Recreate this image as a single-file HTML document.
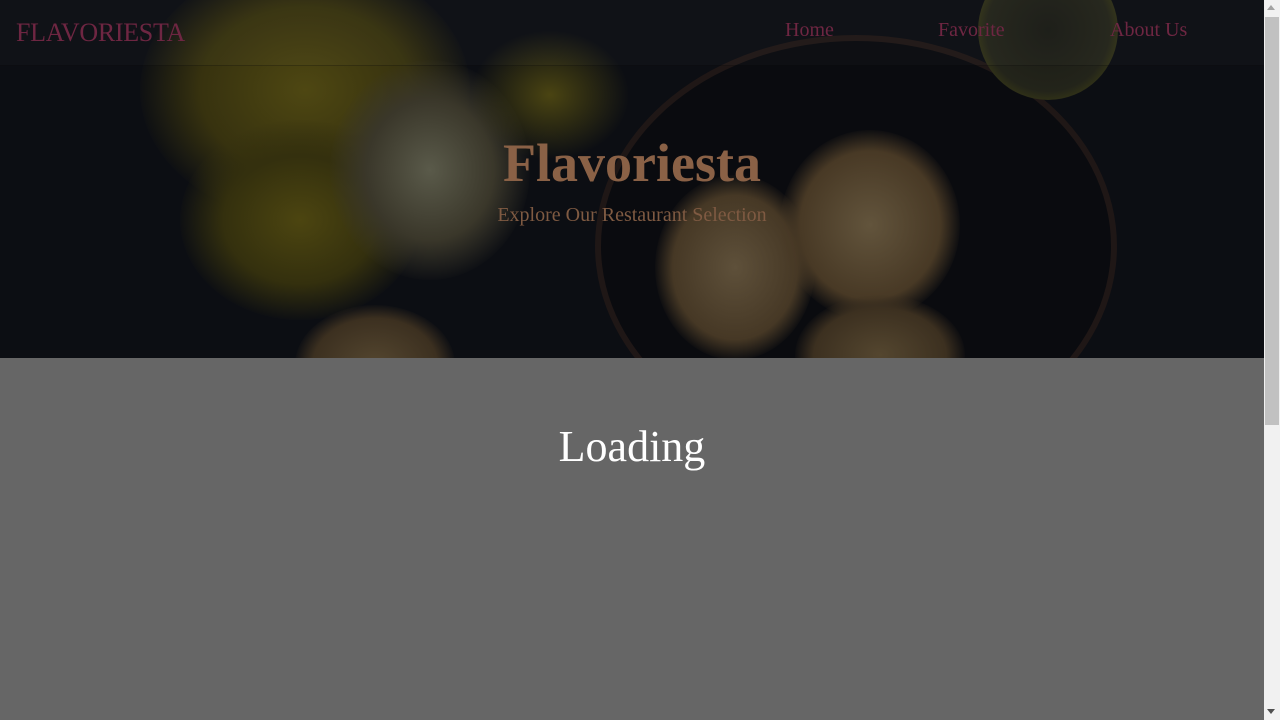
<!DOCTYPE html>
<html><head><meta charset="utf-8"><style>
html,body{margin:0;padding:0;width:1280px;height:720px;overflow:hidden;background:#666;font-family:"Liberation Serif","DejaVu Serif",serif}
.page{position:absolute;left:0;top:0;width:1264px;height:720px;background:#666}
.hero{position:absolute;left:0;top:0;width:1264px;height:358px;background:#0c0e13;overflow:hidden}
.b{position:absolute;border-radius:50%}
.nav{position:absolute;left:0;top:0;width:1264px;height:65px;background:rgba(255,255,255,0.02);border-bottom:1px solid rgba(0,0,0,0.25)}
.logo{position:absolute;left:16px;top:18px;font-size:26px;color:#6e2642;letter-spacing:-0.3px}
.nl{position:absolute;top:19px;font-size:20px;color:#6e2642}
h1{position:absolute;left:0;width:1264px;top:132px;margin:0;text-align:center;font-size:54px;font-weight:bold;color:#8a6146}
.sub{position:absolute;left:0;width:1264px;top:204px;text-align:center;font-size:20px;color:#7f5a42}
.load{position:absolute;left:0;width:1264px;top:421px;text-align:center;font-size:44px;color:#fff}
.sb{position:absolute;left:1264px;top:0;width:16px;height:720px;background:#f1f1f1}
.th{position:absolute;left:1265px;top:17px;width:14px;height:408px;background:#c1c1c1}
</style></head><body>
<div class="page">
<div class="hero">
 <div class="b" style="left:140px;top:-40px;width:330px;height:260px;background:radial-gradient(ellipse,#4e4712 0%,#37320f 45%,rgba(12,14,19,0) 72%)"></div>
 <div class="b" style="left:180px;top:120px;width:240px;height:200px;background:radial-gradient(ellipse,#4c4510 0%,#34300e 45%,rgba(12,14,19,0) 72%)"></div>
 <div class="b" style="left:330px;top:60px;width:200px;height:220px;background:radial-gradient(ellipse,#5a5a4a 0%,#3a372a 45%,rgba(12,14,19,0) 72%)"></div>
 <div class="b" style="left:470px;top:30px;width:160px;height:130px;background:radial-gradient(ellipse,#4a4412 0%,rgba(12,14,19,0) 70%)"></div>
 <div class="b" style="left:595px;top:35px;width:510px;height:410px;border:6px solid #1f1716;background:#0a0b0f"></div>
 <div class="b" style="left:978px;top:-40px;width:140px;height:140px;background:radial-gradient(circle,#1a1b16 0%,#23241a 62%,#2e2f18 70%,rgba(12,14,19,0) 76%)"></div>
 <div class="b" style="left:655px;top:175px;width:160px;height:185px;background:radial-gradient(ellipse,#5e503a 0%,#463825 55%,rgba(12,14,19,0) 72%)"></div>
 <div class="b" style="left:780px;top:130px;width:180px;height:190px;background:radial-gradient(ellipse,#62543c 0%,#483925 55%,rgba(12,14,19,0) 72%)"></div>
 <div class="b" style="left:795px;top:295px;width:170px;height:120px;background:radial-gradient(ellipse,#54462f 0%,#3c3020 55%,rgba(12,14,19,0) 72%)"></div>
 <div class="b" style="left:295px;top:305px;width:160px;height:120px;background:radial-gradient(ellipse,#54462f 0%,#3c3020 55%,rgba(12,14,19,0) 72%)"></div>
 <div class="nav"></div>
 <div class="logo">FLAVORIESTA</div>
 <div class="nl" style="left:785px">Home</div>
 <div class="nl" style="left:938px">Favorite</div>
 <div class="nl" style="left:1110px">About Us</div>
 <h1>Flavoriesta</h1>
 <div class="sub">Explore Our Restaurant Selection</div>
</div>
<div class="load">Loading</div>
</div>
<div class="sb"></div><div class="th"></div>
<div style="position:absolute;left:1267px;top:5px;width:0;height:0;border-left:4px solid transparent;border-right:4px solid transparent;border-bottom:5px solid #a3a3a3"></div>
<div style="position:absolute;left:1267px;top:709px;width:0;height:0;border-left:4px solid transparent;border-right:4px solid transparent;border-top:5px solid #505050"></div>
</body></html>
